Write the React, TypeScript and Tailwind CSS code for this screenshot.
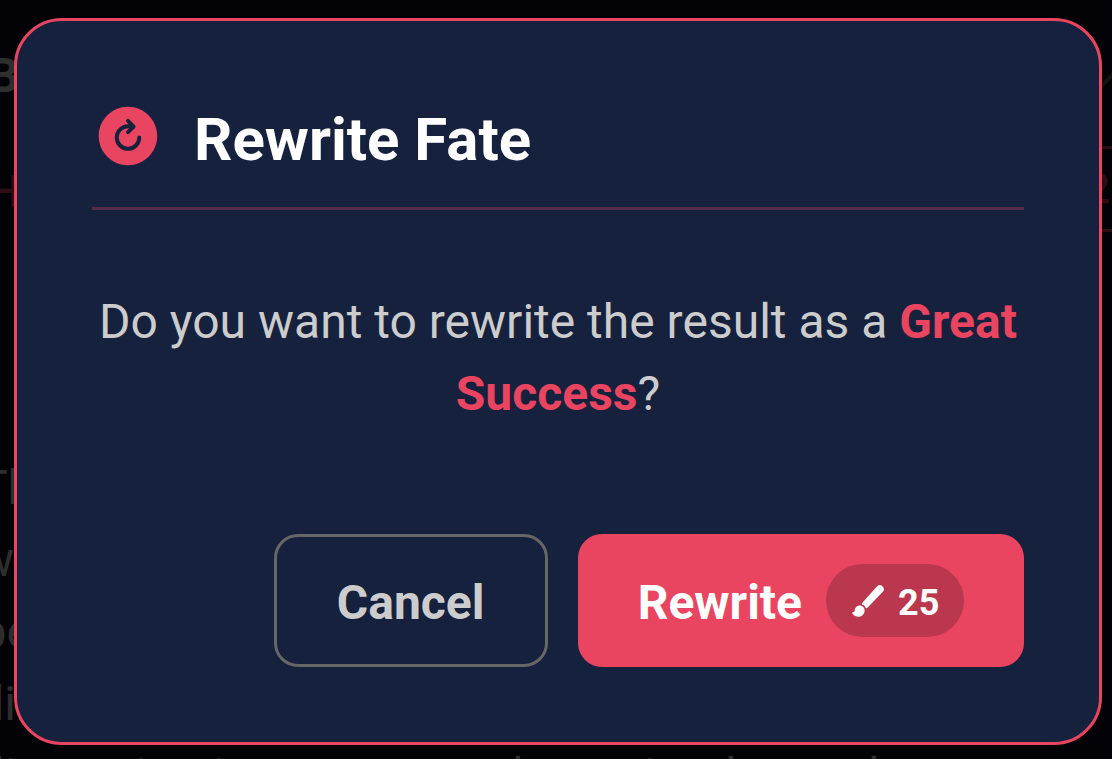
import { IoBrush, IoRefreshCircle } from "react-icons/io5";

function Backdrop() {
  return (
    <div
      aria-hidden="true"
      className="absolute inset-0 overflow-hidden pt-10 text-[48px] leading-[72px] whitespace-nowrap text-[#2e2e2e] select-none"
    >
      <div className="flex justify-between">
        <div className="flex w-[34px] flex-col items-end">
          <p className="pr-[15px] font-bold">B</p>
          <p className="pt-[44px] pr-[14px] text-[44px] font-medium text-[#2e0d14]">H</p>
          <p className="pt-[224px]">Th</p>
          <p className="pr-[20px]">w</p>
          <p className="pr-[2px]">be</p>
          <p className="pr-[18px]">li</p>
        </div>
        <div className="flex flex-col items-end gap-[54px] pt-[26px]">
          <svg width="14" height="26" viewBox="0 0 14 26">
            <path d="M0 24 L16 7" stroke="#121212" strokeWidth="4" />
          </svg>
          <p className="border-y-[3px] border-[#2e0d14] pr-[2px] text-[42px] leading-[80px] font-medium text-[#2e0d14]">
            2
          </p>
        </div>
      </div>
      <div className="-ml-[7px] grid grid-cols-[142px_78px_299px_132px_81px_143px_auto]">
        <span>li</span>
        <span>i</span>
        <span>i</span>
        <span>l</span>
        <span>i</span>
        <span>l</span>
        <span>l</span>
      </div>
    </div>
  );
}

export default function App() {
  return (
    <div className="relative min-h-screen overflow-hidden bg-[#030307] pt-[18px] pr-[10px] pb-[14px] pl-[14px] font-[Roboto,sans-serif]">
      <Backdrop />
      <section
        role="dialog"
        aria-modal="true"
        aria-labelledby="dialog-title"
        className="relative rounded-[48px] border-[3px] border-[#e94560] bg-[#16213e] p-[75px]"
      >
        <header className="flex items-center gap-[30px] border-b-[3px] border-[#552c49] pb-[31px]">
          <IoRefreshCircle className="size-[72px] shrink-0 text-[#e94560]" />
          <h1 id="dialog-title" className="pt-[8px] text-[60px] leading-[72px] font-bold text-white">
            Rewrite Fate
          </h1>
        </header>
        <p className="pt-[76px] pb-[104px] text-center text-[48px] leading-[72px] text-[#cccccc]">
          Do you want to rewrite the result as a <strong className="font-bold text-[#e94560]">Great Success</strong>?
        </p>
        <div className="flex justify-end gap-[30px]">
          <button
            type="button"
            className="min-w-[274px] rounded-[24px] border-[3px] border-[#666666] px-[60px] pt-[4px] text-[48px] leading-[72px] font-bold text-[#cccccc]"
          >
            Cancel
          </button>
          <button
            type="button"
            className="flex items-center gap-[24px] rounded-[24px] bg-[#e94560] px-[60px] py-[30px] text-[48px] leading-[68px] font-bold text-white"
          >
            <span className="pt-[4px]">Rewrite</span>
            <span className="flex min-w-[138px] items-center gap-[12px] rounded-full bg-[#ba374d] px-[24px] text-[36px] leading-[67px]">
              <IoBrush className="size-[36px]" />
              <span className="pt-[6px]">25</span>
            </span>
          </button>
        </div>
      </section>
    </div>
  );
}
